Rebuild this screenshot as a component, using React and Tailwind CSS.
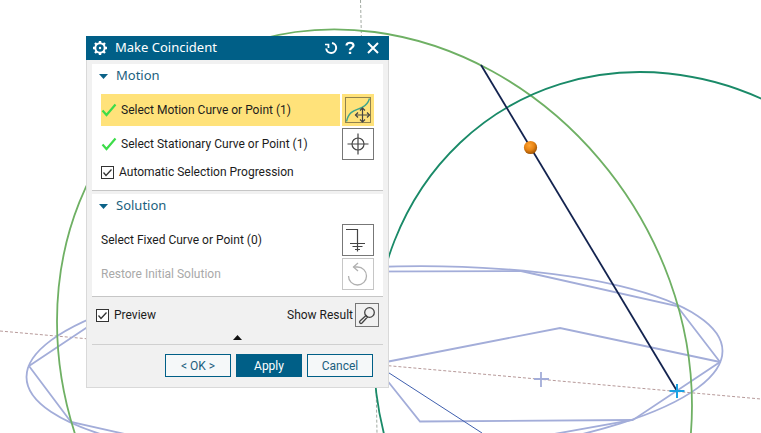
import { useState } from "react";

const toolButton = "flex size-8 shrink-0 items-center justify-center border";
const footerButton = "h-[23px] w-[66px] border border-[#005f87] text-xs";

const Scene = () => (
  <svg
    className="absolute inset-0 size-full"
    viewBox="0 0 761 433"
    preserveAspectRatio="xMinYMin slice"
    fill="none"
    aria-hidden="true"
  >
    <defs>
      <radialGradient id="ball" cx="0.42" cy="0.35" r="0.65">
        <stop offset="0" stopColor="#ffa434" />
        <stop offset="0.55" stopColor="#e88413" />
        <stop offset="1" stopColor="#9c5205" />
      </radialGradient>
    </defs>

    {/* datum axes */}
    <path d="M0 331 L761 399" stroke="#b79a9a" strokeDasharray="3 2" />
    <path d="M360.5 0 L362 60 L376 380 L377 433" stroke="#a3aba3" strokeDasharray="3 2" />

    {/* reference sketch */}
    <g stroke="#a3add9" strokeWidth="1.8">
      <circle r="1" transform="matrix(348 -13 0 97 374.5 364)" vectorEffect="non-scaling-stroke" />
      <path d="M29 366 L116 308 L229 272 L521 271 L677 306 L720 362 L633 420 L430 456 L228 457 L71 422 Z" />
      <path d="M386 362 L560 328 L720 362" />
      <path d="M386 379 L420 421.5 L633 420" />
      <path d="M541 372 V387 M534 379 H549" />
    </g>
    <path d="M386 371 L482 433" stroke="#3f5fae" />

    {/* curves */}
    <circle
      r="1"
      transform="matrix(317.5 42 0 331.5 374.5 363.5)"
      vectorEffect="non-scaling-stroke"
      stroke="#6fb064"
      strokeWidth="1.8"
    />
    <circle
      r="1"
      transform="matrix(294.7 30 0 308.8 668.5 382.3)"
      vectorEffect="non-scaling-stroke"
      stroke="#1a8a68"
      strokeWidth="1.8"
    />
    <path d="M481 65 L677 391" stroke="#13234f" strokeWidth="1.8" />
    <circle cx="530.5" cy="147.5" r="6.6" fill="url(#ball)" />
    <path d="M677 384 V398 M669.5 391 H684.5" stroke="#1ba1e2" strokeWidth="2" />
  </svg>
);

const GearIcon = () => (
  <svg className="size-4" viewBox="0 0 16 16" fill="none" stroke="#fff" aria-hidden="true">
    <circle cx="8" cy="8" r="4.7" strokeWidth="2" />
    <path
      d="M8 1 V3 M8 13 V15 M1 8 H3 M13 8 H15 M3 3 L4.5 4.5 M11.5 11.5 L13 13 M13 3 L11.5 4.5 M4.5 11.5 L3 13"
      strokeWidth="2.4"
    />
    <circle cx="8" cy="8" r="1.2" fill="#fff" stroke="none" />
  </svg>
);

const GreenCheck = () => (
  <svg className="size-4 shrink-0" viewBox="0 0 16 16" fill="none" aria-hidden="true">
    <path d="M1.5 8.5 L5.5 13 L14.5 2.5" stroke="#3ddc4a" strokeWidth="2.2" />
  </svg>
);

const Panel = ({ title, children }) => (
  <section className="border-b border-[#c6c6c6] bg-white px-[9px] pb-[6px]">
    <h2 className="-ml-[2px] flex h-6 items-center gap-2 font-['Noto_Sans',sans-serif] text-[13px] text-[#1b5f7e]">
      <svg className="h-[5px] w-[9px]" viewBox="0 0 9 5" aria-hidden="true">
        <path d="M0 0 H9 L4.5 5 Z" fill="#0b6288" />
      </svg>
      {title}
    </h2>
    {children}
  </section>
);

const CheckBox = ({ label, checked, onChange }) => (
  <label className="flex items-center gap-[5px]">
    <span className="relative size-[13px]">
      <input
        type="checkbox"
        checked={checked}
        onChange={(e) => onChange(e.target.checked)}
        className="peer block size-[13px] appearance-none border border-[#333] bg-white"
      />
      <svg
        className="pointer-events-none absolute inset-0 hidden size-[13px] peer-checked:block"
        viewBox="0 0 13 13"
        fill="none"
        aria-hidden="true"
      >
        <path d="M2.5 6.5 L5 9.5 L10.5 3.5" stroke="#333" strokeWidth="1.3" />
      </svg>
    </span>
    {label}
  </label>
);

const MakeCoincident = () => {
  const [progression, setProgression] = useState(true);
  const [preview, setPreview] = useState(true);

  return (
    <div
      role="dialog"
      aria-labelledby="dialog-title"
      className="absolute top-9 left-[86px] w-[303px] border border-t-0 border-[#d9d9d9] bg-[#f1f1f1] pb-[10px] font-[Roboto,sans-serif] text-xs text-[#1c1c1c]"
    >
      {/* Title bar */}
      <header className="-mx-px flex h-6 items-center bg-[#005f87] pr-[9px] pl-[6px] text-white">
        <GearIcon />
        <h1 id="dialog-title" className="ml-[7px] flex-1 font-['Noto_Sans',sans-serif] text-[13px]">
          Make Coincident
        </h1>
        <button type="button" aria-label="Reset" className="mr-[5px]">
          <svg className="size-[14px]" viewBox="0 0 14 14" fill="none" stroke="#fff">
            <path d="M8 2 A5 5 0 1 1 2.2 7.5" strokeWidth="2" />
            <path d="M1 3.5 H4.5 V7" strokeWidth="1.7" />
          </svg>
        </button>
        <button type="button" aria-label="Help" className="mr-[9px]">
          <svg className="size-[14px]" viewBox="0 0 14 14" fill="none" stroke="#fff">
            <path d="M3.5 4.5 C3.5 0.8 10.5 0.8 10.5 4.5 C10.5 6.6 7 6.6 7 9.3" strokeWidth="2.2" />
            <path d="M7 10.8 V13" strokeWidth="2.4" />
          </svg>
        </button>
        <button type="button" aria-label="Close">
          <svg className="size-[14px]" viewBox="0 0 14 14" fill="none" stroke="#fff">
            <path d="M2 2 L12 12 M12 2 L2 12" strokeWidth="2" />
          </svg>
        </button>
      </header>

      <div className="px-[5px] pt-1">
        <Panel title="Motion">
          <div className="mt-[6px] flex gap-[2px]">
            <div className="flex h-8 flex-1 items-center gap-1 bg-[#ffe27a]">
              <GreenCheck />
              Select Motion Curve or Point (1)
            </div>
            <button type="button" aria-label="Motion curve" className={`${toolButton} border-[#ffe27a] bg-[#ffe27a]`}>
              <svg className="size-[26px]" viewBox="0 0 26 26" fill="none">
                <rect x="0.5" y="0.5" width="25" height="25" stroke="#222" strokeDasharray="1 1" />
                <path d="M1.5 24.5 C4 13 11 13.5 17 10.5 C22 8 23.5 5 24.5 1.5" stroke="#3fa58c" strokeWidth="1.4" />
                <path d="M17.5 11 V25 M10.5 18 H24.5" stroke="#444" strokeWidth="1.2" />
                <path
                  d="M15 13.5 L17.5 11 L20 13.5 M15 22.5 L17.5 25 L20 22.5 M13 15.5 L10.5 18 L13 20.5 M22 15.5 L24.5 18 L22 20.5"
                  stroke="#444"
                  strokeWidth="1.2"
                />
              </svg>
            </button>
          </div>
          <div className="mt-[2px] flex gap-[2px]">
            <div className="flex h-8 flex-1 items-center gap-1">
              <GreenCheck />
              Select Stationary Curve or Point (1)
            </div>
            <button type="button" aria-label="Stationary point" className={`${toolButton} border-[#777] bg-white`}>
              <svg className="size-6" viewBox="0 0 24 24" fill="none" stroke="#444" strokeWidth="1.2">
                <circle cx="12" cy="12" r="6" />
                <path d="M12 1.5 V22.5 M1.5 12 H22.5" />
              </svg>
            </button>
          </div>
          <div className="flex h-6 items-center">
            <CheckBox label="Automatic Selection Progression" checked={progression} onChange={setProgression} />
          </div>
        </Panel>
      </div>

      <div className="px-[5px] pt-[3px]">
        <Panel title="Solution">
          <div className="mt-[6px] flex items-center justify-between">
            Select Fixed Curve or Point (0)
            <button type="button" aria-label="Fixed curve" className={`${toolButton} border-[#777] bg-white`}>
              <svg className="size-[26px]" viewBox="0 0 26 26" fill="none" stroke="#444" strokeWidth="1.2">
                <path d="M1 2.5 H12.5 V24.5 M5 16.5 H20 M7.5 19.5 H17.5 M10 22.5 H15" />
              </svg>
            </button>
          </div>
          <div className="mt-[2px] flex items-center justify-between text-[#a9a9a9]">
            Restore Initial Solution
            <button type="button" disabled aria-label="Restore" className={`${toolButton} border-[#c6c6c6] bg-white`}>
              <svg className="size-6" viewBox="0 0 24 24" fill="none" stroke="#b0b0b0" strokeWidth="1.3">
                <path d="M2.5 14 A9 9 0 1 0 11.5 5 H7.5" />
                <path d="M12 1 L7.5 5 L12 9" />
              </svg>
            </button>
          </div>
        </Panel>
      </div>

      {/* Preview */}
      <div className="flex items-center px-[9px] pt-[6px]">
        <div className="flex-1">
          <CheckBox label="Preview" checked={preview} onChange={setPreview} />
        </div>
        <label htmlFor="show-result">Show Result</label>
        <button
          id="show-result"
          type="button"
          className="ml-[2px] flex size-6 items-center justify-center border border-[#777]"
        >
          <svg className="size-5" viewBox="0 0 20 20" fill="none" stroke="#444" strokeWidth="1.3">
            <circle cx="12.5" cy="7.5" r="4.8" />
            <path d="M9 10.5 L3 16 A1 1 0 0 0 5 18 L10.5 12 Z" />
          </svg>
        </button>
      </div>

      <div className="mx-[5px] flex justify-center border-b border-[#d0d0d0] pt-2 pb-1">
        <button type="button" aria-label="Collapse">
          <svg className="h-[5px] w-[9px]" viewBox="0 0 9 5">
            <path d="M0 5 H9 L4.5 0 Z" fill="#111" />
          </svg>
        </button>
      </div>

      <footer className="flex justify-end gap-[5px] pt-[9px] pr-[15px]">
        <button type="button" className={`${footerButton} bg-[#f5f8f9] text-[#1b5f7e]`}>&lt; OK &gt;</button>
        <button type="button" className={`${footerButton} bg-[#005f87] text-white`}>Apply</button>
        <button type="button" className={`${footerButton} bg-[#f5f8f9] text-[#1b5f7e]`}>Cancel</button>
      </footer>
    </div>
  );
};

const App = () => (
  <main className="relative min-h-screen overflow-hidden bg-white">
    <Scene />
    <MakeCoincident />
  </main>
);

export default App;
